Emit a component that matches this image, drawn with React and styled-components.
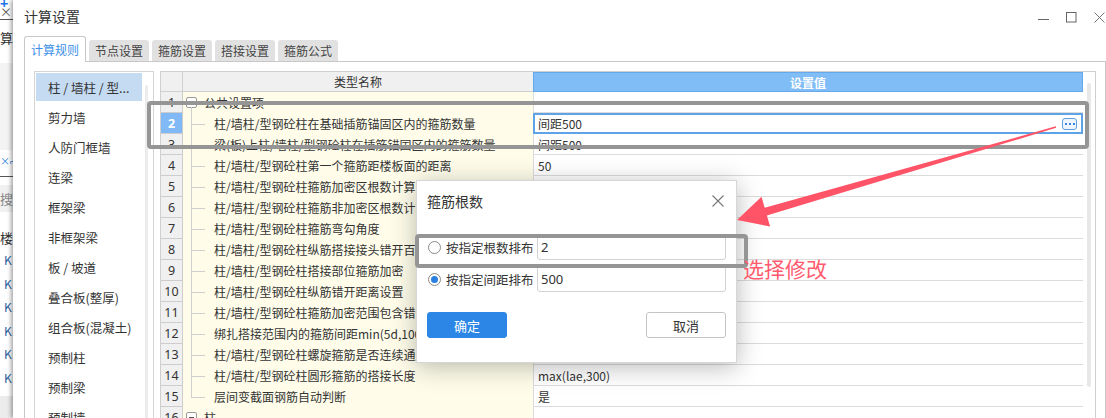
import React from 'react';
import styled, { createGlobalStyle } from 'styled-components';

const GlobalStyle = createGlobalStyle`
  html, body {
    margin: 0;
    padding: 0;
    width: 1106px;
    height: 418px;
    overflow: hidden;
    background: #fff;
  }
  body {
    font-family: "Noto Sans CJK SC", "Noto Sans", sans-serif;
    font-size: 12px;
    color: #333;
  }
  * { box-sizing: border-box; }
`;

const Screen = styled.div`
  position: relative;
  width: 1106px;
  height: 418px;
  display: flex;
  overflow: hidden;
`;

/* ---- the application behind the dialog, only a sliver is visible ---- */
const BackStrip = styled.div`
  width: 13px;
  flex: none;
  display: flex;
  flex-direction: column;
  overflow: hidden;
  background: #fff;
`;

const StripCell = styled.div`
  flex: none;
  height: ${p => p.$h}px;
  line-height: ${p => p.$lh || p.$h}px;
  background: ${p => p.$bg || 'transparent'};
  color: ${p => p.$c || '#333'};
  font-size: ${p => p.$fs || 13}px;
  font-weight: ${p => (p.$bold ? 700 : 400)};
  padding-left: ${p => p.$pl || 0}px;
  border-bottom: ${p => (p.$line ? '1px solid #555' : 'none')};
  white-space: nowrap;
  overflow: hidden;
`;

const StripFill = styled.div`
  flex: 1;
  background: #ececec;
`;

/* ---- the settings window ---- */
const Window = styled.div`
  position: relative;
  z-index: 1;
  flex: 1;
  display: flex;
  flex-direction: column;
  background: #fff;
  box-shadow: -2px 0 4px rgba(0, 0, 0, 0.35);
`;

const TitleBar = styled.div`
  height: 32px;
  flex: none;
  display: flex;
  align-items: center;
  justify-content: space-between;
  padding-left: 11px;
  padding-right: 1px;
`;

const Title = styled.div`
  font-size: 14px;
  color: #333;
`;

const Controls = styled.div`
  display: flex;
  align-items: center;
  gap: 17px;
  padding-top: 2px;
`;

const TabBar = styled.div`
  height: 29px;
  flex: none;
  display: flex;
  align-items: flex-end;
  gap: 3px;
  padding-left: 11px;
  position: relative;
  z-index: 2;
`;

const Tab = styled.div`
  width: ${p => (p.$active ? 62 : 60)}px;
  height: ${p => (p.$active ? 26 : 21)}px;
  margin-bottom: ${p => (p.$active ? -1 : 0)}px;
  display: flex;
  align-items: center;
  justify-content: center;
  font-size: 12px;
  color: ${p => (p.$active ? '#3d8fe8' : '#444')};
  background: ${p => (p.$active ? '#fff' : '#e1e1e1')};
  border: ${p => (p.$active ? '1px solid #c8c8c8' : 'none')};
  border-bottom: none;
  border-radius: 3px 3px 0 0;
`;

const TabPanel = styled.div`
  flex: 1;
  margin-left: 11px;
  border: 1px solid #c8c8c8;
  border-bottom: none;
  padding: 9px 9px 0 9px;
  display: flex;
  gap: 6px;
  min-height: 0;
`;

/* ---- category list ---- */
const ListBox = styled.div`
  width: 120px;
  flex: none;
  border: 1px solid #d4d4d4;
  border-bottom: none;
  display: flex;
`;

const ListItems = styled.div`
  width: 107px;
  padding-top: 1px;
  display: flex;
  flex-direction: column;
`;

const ListItem = styled.div`
  height: 28px;
  margin: 0 0 2px 1px;
  flex: none;
  display: flex;
  align-items: center;
  padding-left: 12px;
  font-size: 12.5px;
  color: #333;
  white-space: nowrap;
  background: ${p => (p.$active ? '#c5dbf2' : 'transparent')};
`;

const ListGutter = styled.div`
  flex: 1;
  padding: 13px 0 0 3px;
`;

const ListThumb = styled.div`
  width: 3px;
  height: 400px;
  background: #ececec;
  border-radius: 2px;
`;

/* ---- settings grid ---- */
const GridBox = styled.div`
  width: 936px;
  flex: none;
  border: 1px solid #cfcfcf;
  border-bottom: none;
  display: flex;
`;

const Table = styled.div`
  width: 922px;
  flex: none;
  display: flex;
  flex-direction: column;
`;

const GridGutter = styled.div`
  flex: 1;
  padding: 11px 0 0 4px;
`;

const GridThumb = styled.div`
  width: 4px;
  height: 304px;
  background: #e8e8e8;
  border-radius: 2px;
`;

const HeaderRow = styled.div`
  height: 20px;
  flex: none;
  display: flex;
`;

const NumHead = styled.div`
  width: 22px;
  background: #f0f0f0;
  border-right: 1px solid #d0d0d0;
  border-bottom: 1px solid #d0d0d0;
`;

const NameHead = styled.div`
  width: 350px;
  background: #f0f0f0;
  border-bottom: 1px solid #d0d0d0;
  display: flex;
  align-items: center;
  justify-content: center;
  font-size: 12px;
  color: #333;
`;

const ValueHead = styled.div`
  width: 550px;
  background: #80bdf7;
  border: 1px solid #66a8ec;
  display: flex;
  align-items: center;
  justify-content: center;
  font-size: 12px;
  font-weight: 700;
  color: #fff;
`;

const Row = styled.div`
  height: 21px;
  flex: none;
  display: flex;
`;

const NumCell = styled.div`
  width: 22px;
  flex: none;
  display: flex;
  align-items: center;
  justify-content: center;
  font-family: "Noto Sans", "Open Sans", sans-serif;
  font-size: 12.5px;
  color: ${p => (p.$active ? '#fff' : '#333')};
  font-weight: ${p => (p.$active ? 700 : 400)};
  background: ${p => (p.$active ? '#80b9f5' : '#f0f0f0')};
  border-right: 1px solid #cdcdcd;
  border-bottom: 1px solid #cdcdcd;
`;

const NameCell = styled.div`
  position: relative;
  width: 350px;
  flex: none;
  display: flex;
  align-items: center;
  padding-left: ${p => (p.$kind === 'group' || p.$kind === 'top' ? 3 : 31)}px;
  background: #fffdea;
  font-size: 12px;
  color: #333;
  white-space: nowrap;
  overflow: hidden;

  &::before {
    content: '';
    display: ${p => (p.$kind === 'top' ? 'none' : 'block')};
    position: absolute;
    left: 8px;
    width: 1px;
    background: #cfcfcf;
    top: ${p => (p.$kind === 'group' ? 15 : 0)}px;
    bottom: ${p => (p.$kind === 'last' ? '50%' : '0')};
  }

  &::after {
    content: '';
    display: ${p => (p.$kind === 'group' || p.$kind === 'top' ? 'none' : 'block')};
    position: absolute;
    left: 8px;
    width: 14px;
    top: 50%;
    height: 1px;
    background: #cfcfcf;
  }
`;

const GroupBox = styled.span`
  width: 11px;
  height: 11px;
  flex: none;
  margin-right: 7px;
  border: 1px solid #9a9a9a;
  border-radius: 2px;
  background: #fff;
  display: flex;
  align-items: center;
  justify-content: center;

  &::before {
    content: '';
    width: 5px;
    height: 1px;
    background: #555;
  }
`;

const ValueCell = styled.div`
  width: 550px;
  flex: none;
  display: flex;
  align-items: center;
  justify-content: space-between;
  padding-left: ${p => (p.$editing ? 3 : 4)}px;
  padding-right: 4px;
  background: #fff;
  font-size: 12px;
  color: #333;
  white-space: nowrap;
  border-left: 1px solid #dcdcdc;
  border-bottom: 1px solid #dcdcdc;
  ${p => p.$editing && 'border: 2px solid #5ea2e8;'}
`;

const MoreButton = styled.div`
  width: 15px;
  height: 12px;
  border: 1px solid #5e9fe2;
  border-radius: 3px;
  background: #eef5fd;
  display: flex;
  align-items: center;
  justify-content: center;
  gap: 2px;

  span {
    width: 2px;
    height: 2px;
    background: #3a86dc;
  }
`;

/* ---- stirrup count dialog ---- */
const Dialog = styled.div`
  position: absolute;
  left: 416px;
  top: 180px;
  width: 321px;
  height: 183px;
  z-index: 10;
  background: #fff;
  border: 1px solid #d6d6d6;
  box-shadow: 0 4px 24px rgba(0, 0, 0, 0.28);
  display: flex;
  flex-direction: column;
`;

const DialogHeader = styled.div`
  height: 39px;
  flex: none;
  display: flex;
  align-items: center;
  justify-content: space-between;
  padding: 0 12px 0 10px;
  font-size: 14px;
  color: #333;
`;

const DialogBody = styled.div`
  padding: 14px 10px 0 11px;
  display: flex;
  flex-direction: column;
  gap: 6px;
`;

const OptionRow = styled.label`
  height: 26px;
  display: flex;
  align-items: center;
`;

const Radio = styled.span`
  width: 13px;
  height: 13px;
  flex: none;
  border: 1px solid #8a8a8a;
  border-radius: 50%;
  display: flex;
  align-items: center;
  justify-content: center;
  background: #fff;

  &::before {
    content: '';
    display: ${p => (p.$checked ? 'block' : 'none')};
    width: 7px;
    height: 7px;
    border-radius: 50%;
    background: #2a7fe0;
  }
`;

const OptionLabel = styled.span`
  margin-left: 5px;
  font-size: 12.5px;
  color: #333;
  white-space: nowrap;
`;

const TextInput = styled.div`
  margin-left: auto;
  width: 189px;
  height: 26px;
  border: 1px solid #d2d2d2;
  border-radius: 3px;
  padding-left: 3px;
  display: flex;
  align-items: center;
  font-family: "Noto Sans", "Open Sans", sans-serif;
  font-size: 13px;
  color: #333;
`;

const DialogFooter = styled.div`
  margin-top: 20px;
  padding: 0 10px;
  display: flex;
  justify-content: space-between;
`;

const Button = styled.div`
  width: 80px;
  height: 26px;
  border-radius: 3px;
  display: flex;
  align-items: center;
  justify-content: center;
  font-size: 13px;
  color: ${p => (p.$primary ? '#fff' : '#333')};
  background: ${p => (p.$primary ? '#2b86e6' : '#fff')};
  border: 1px solid ${p => (p.$primary ? '#2b86e6' : '#c4c4c4')};
`;

/* ---- annotations drawn over the screenshot ---- */
const Marker = styled.div`
  position: absolute;
  z-index: 20;
  left: ${p => p.$x}px;
  top: ${p => p.$y}px;
  width: ${p => p.$w}px;
  height: ${p => p.$h}px;
  border: 4px solid #959595;
  border-radius: 4px;
  pointer-events: none;
`;

const ArrowLayer = styled.svg`
  position: absolute;
  left: 0;
  top: 0;
  z-index: 21;
  pointer-events: none;
`;

const Note = styled.div`
  position: absolute;
  z-index: 21;
  left: 743px;
  top: 255px;
  font-size: 21px;
  line-height: 26px;
  color: #ff5a6e;
  white-space: nowrap;
`;

const categories = [
  '柱 / 墙柱 / 型...',
  '剪力墙',
  '人防门框墙',
  '连梁',
  '框架梁',
  '非框架梁',
  '板 / 坡道',
  '叠合板(整厚)',
  '组合板(混凝土)',
  '预制柱',
  '预制梁',
  '预制墙',
];

const rows = [
  { name: '公共设置项', kind: 'group' },
  { name: '柱/墙柱/型钢砼柱在基础插筋锚固区内的箍筋数量', value: '间距500', editing: true },
  { name: '梁(板)上柱/墙柱/型钢砼柱在插筋锚固区内的箍筋数量', value: '间距500' },
  { name: '柱/墙柱/型钢砼柱第一个箍筋距楼板面的距离', value: '50' },
  { name: '柱/墙柱/型钢砼柱箍筋加密区根数计算方式', value: '向上取整+1' },
  { name: '柱/墙柱/型钢砼柱箍筋非加密区根数计算方式', value: '向上取整-1' },
  { name: '柱/墙柱/型钢砼柱箍筋弯勾角度', value: '135°' },
  { name: '柱/墙柱/型钢砼柱纵筋搭接接头错开百分率', value: '50%' },
  { name: '柱/墙柱/型钢砼柱搭接部位箍筋加密', value: '是' },
  { name: '柱/墙柱/型钢砼柱纵筋错开距离设置', value: '按规范计算' },
  { name: '柱/墙柱/型钢砼柱箍筋加密范围包含错开距离', value: '是' },
  { name: '绑扎搭接范围内的箍筋间距min(5d,100)', value: '100' },
  { name: '柱/墙柱/型钢砼柱螺旋箍筋是否连续通过', value: '是' },
  { name: '柱/墙柱/型钢砼柱圆形箍筋的搭接长度', value: 'max(lae,300)' },
  { name: '层间变截面钢筋自动判断', value: '是', kind: 'last' },
  { name: '柱', kind: 'top' },
];

const tabs = ['计算规则', '节点设置', '箍筋设置', '搭接设置', '箍筋公式'];

function BackApp() {
  return (
    <BackStrip>
      <StripCell $h={7} $lh={6} $c="#1a73e8" $fs={14} $bold>+</StripCell>
      <StripCell $h={13} $lh={10} $c="#555" $fs={12} $line>×</StripCell>
      <StripCell $h={8} />
      <StripCell $h={20}>算</StripCell>
      <StripCell $h={15} />
      <StripCell $h={87} $bg="#f3f3f3" />
      <StripCell $h={27} $lh={22} $c="#2f7fd8" $fs={10} $line>×⌐</StripCell>
      <StripCell $h={8} />
      <StripCell $h={27} $bg="#f1f1f1" $c="#888">搜</StripCell>
      <StripCell $h={16} />
      <StripCell $h={20}>楼</StripCell>
      {[0, 1, 2, 3, 4, 5].map(i => (
        <StripCell key={i} $h={23.6} $pl={4} $c="#2d5e9e" $fs={12}>K</StripCell>
      ))}
      <StripCell $h={6} />
      <StripFill />
    </BackStrip>
  );
}

function WindowControls() {
  return (
    <Controls>
      <svg width="11" height="11" viewBox="0 0 11 11">
        <line x1="0" y1="7.5" x2="11" y2="7.5" stroke="#666" strokeWidth="1" />
      </svg>
      <svg width="11" height="11" viewBox="0 0 11 11">
        <rect x="0.5" y="0.5" width="9.5" height="9.5" fill="none" stroke="#666" strokeWidth="1" />
      </svg>
      <svg width="11" height="11" viewBox="0 0 11 11">
        <path d="M0.5 0.5 L10.5 10.5 M10.5 0.5 L0.5 10.5" stroke="#777" strokeWidth="1" />
      </svg>
    </Controls>
  );
}

function SettingsGrid() {
  return (
    <GridBox>
      <Table>
        <HeaderRow>
          <NumHead />
          <NameHead>类型名称</NameHead>
          <ValueHead>设置值</ValueHead>
        </HeaderRow>
        {rows.map((r, i) => (
          <Row key={i}>
            <NumCell $active={r.editing}>{i + 1}</NumCell>
            <NameCell $kind={r.kind || 'item'}>
              {(r.kind === 'group' || r.kind === 'top') && <GroupBox />}
              {r.name}
            </NameCell>
            <ValueCell $editing={r.editing}>
              <span>{r.value}</span>
              {r.editing && (
                <MoreButton>
                  <span />
                  <span />
                  <span />
                </MoreButton>
              )}
            </ValueCell>
          </Row>
        ))}
      </Table>
      <GridGutter>
        <GridThumb />
      </GridGutter>
    </GridBox>
  );
}

function StirrupDialog() {
  return (
    <Dialog>
      <DialogHeader>
        <span>箍筋根数</span>
        <svg width="12" height="12" viewBox="0 0 12 12">
          <path d="M0.5 0.5 L11.5 11.5 M11.5 0.5 L0.5 11.5" stroke="#777" strokeWidth="1.1" />
        </svg>
      </DialogHeader>
      <DialogBody>
        <OptionRow>
          <Radio />
          <OptionLabel>按指定根数排布</OptionLabel>
          <TextInput>2</TextInput>
        </OptionRow>
        <OptionRow>
          <Radio $checked />
          <OptionLabel>按指定间距排布</OptionLabel>
          <TextInput>500</TextInput>
        </OptionRow>
      </DialogBody>
      <DialogFooter>
        <Button $primary>确定</Button>
        <Button>取消</Button>
      </DialogFooter>
    </Dialog>
  );
}

export default function App() {
  return (
    <>
      <GlobalStyle />
      <Screen>
        <BackApp />
        <Window>
          <TitleBar>
            <Title>计算设置</Title>
            <WindowControls />
          </TitleBar>
          <TabBar>
            {tabs.map((t, i) => (
              <Tab key={t} $active={i === 0}>{t}</Tab>
            ))}
          </TabBar>
          <TabPanel>
            <ListBox>
              <ListItems>
                {categories.map((c, i) => (
                  <ListItem key={c} $active={i === 0}>{c}</ListItem>
                ))}
              </ListItems>
              <ListGutter>
                <ListThumb />
              </ListGutter>
            </ListBox>
            <SettingsGrid />
          </TabPanel>
        </Window>

        <StirrupDialog />

        <Marker $x={147} $y={101} $w={942} $h={48} />
        <Marker $x={415} $y={234} $w={333} $h={34} />

        <ArrowLayer width="1106" height="418" viewBox="0 0 1106 418">
          <polygon
            points="1055.8,126.3 764.7,207.8 761.5,196.7 737,220 770.1,226.5 766.9,215.4 1056.2,127.7"
            fill="#ff5468"
          />
        </ArrowLayer>
        <Note>选择修改</Note>
      </Screen>
    </>
  );
}
